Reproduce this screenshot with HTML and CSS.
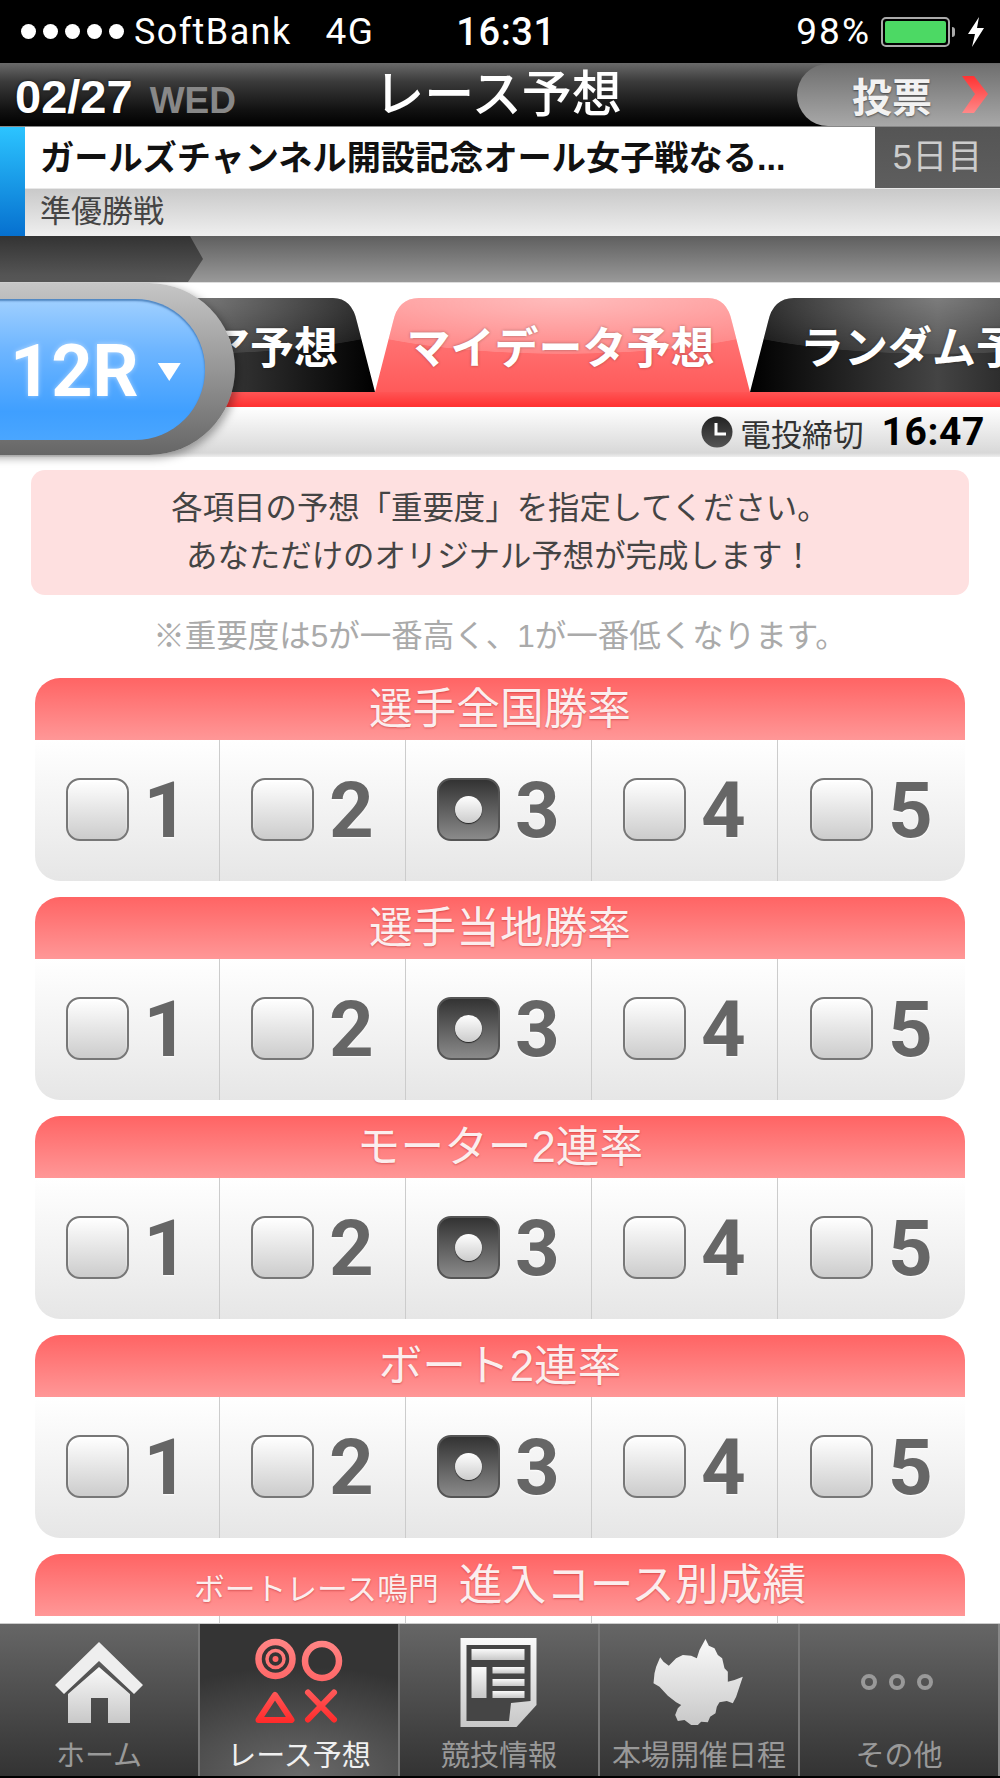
FILE: index.html
```html
<!DOCTYPE html>
<html lang="ja">
<head>
<meta charset="utf-8">
<title>レース予想</title>
<link rel="stylesheet" href="styles.css">
</head>
<body>
<div class="app">
  <div class="status">
    <div class="status-left">
      <span class="dots"><i></i><i></i><i></i><i></i><i></i></span>
      <span class="carrier">SoftBank</span>
      <span class="net">4G</span>
    </div>
    <div class="status-time">16:31</div>
    <div class="status-right">
      <span class="pct">98%</span>
      <span class="battery"><span class="battery-fill"></span></span>
      <span class="battery-nub"></span>
      <svg class="bolt" viewBox="0 0 18 30"><path d="M12 0 L1 17 L8 17 L5 30 L17 11 L10 11 Z" fill="#fff"/></svg>
    </div>
  </div>

  <header class="head">
    <div class="date"><b>02/27</b><span>WED</span></div>
    <h1 class="title">レース予想</h1>
    <div class="vote-wrap">
      <div class="vote"><span>投票</span>
        <svg class="chev" viewBox="0 0 26 37"><defs><linearGradient id="cg" x1="0" y1="0" x2="0" y2="1"><stop offset="0" stop-color="#f33"/><stop offset="1" stop-color="#f88"/></linearGradient></defs><path d="M0 0 L12 0 L26 18 L12 37 L0 37 L13 18 Z" fill="url(#cg)"/></svg>
      </div>
    </div>
  </header>

  <section class="event">
    <div class="strip"></div>
    <div class="event-body">
      <div class="event-top">
        <div class="event-title">ガールズチャンネル開設記念オール女子戦なる...</div>
        <div class="event-day">5日目</div>
      </div>
      <div class="event-sub">準優勝戦</div>
    </div>
  </section>

  <div class="progress"><div class="progress-done"></div></div>

  <section class="tabs-wrap">
    <div class="tabs">
      <div class="tab tab-dark tab-first">プレミア予想</div>
      <div class="tab tab-red">マイデータ予想</div>
      <div class="tab tab-dark tab-last">ランダム予想</div>
    </div>
    <div class="tabs-line"></div>
    <div class="deadline">
      <svg class="clock" viewBox="0 0 32 32"><defs><linearGradient id="clk" x1="0" y1="0" x2="0" y2="1"><stop offset="0" stop-color="#222"/><stop offset="1" stop-color="#555"/></linearGradient></defs><circle cx="16" cy="16" r="15.5" fill="url(#clk)"/><path d="M15 7 V18 H25" fill="none" stroke="#fff" stroke-width="3"/></svg>
      <span class="dl-label">電投締切</span>
      <b class="dl-time">16:47</b>
    </div>
    <div class="race-btn">
      <div class="race-inner"><span class="race-no">12R</span><i class="race-tri"></i></div>
    </div>
  </section>

  <main class="main">
    <div class="notice">各項目の予想「重要度」を指定してください。<br>あなただけのオリジナル予想が完成します！</div>
    <p class="note">※重要度は5が一番高く、1が一番低くなります。</p>

    <section class="card">
      <h2 class="card-head">選手全国勝率</h2>
      <div class="card-body">
        <div class="cell"><i class="box"></i><b class="num">1</b></div>
        <div class="cell"><i class="box"></i><b class="num">2</b></div>
        <div class="cell"><i class="box on"></i><b class="num">3</b></div>
        <div class="cell"><i class="box"></i><b class="num">4</b></div>
        <div class="cell"><i class="box"></i><b class="num">5</b></div>
      </div>
    </section>
    <section class="card">
      <h2 class="card-head">選手当地勝率</h2>
      <div class="card-body">
        <div class="cell"><i class="box"></i><b class="num">1</b></div>
        <div class="cell"><i class="box"></i><b class="num">2</b></div>
        <div class="cell"><i class="box on"></i><b class="num">3</b></div>
        <div class="cell"><i class="box"></i><b class="num">4</b></div>
        <div class="cell"><i class="box"></i><b class="num">5</b></div>
      </div>
    </section>
    <section class="card">
      <h2 class="card-head">モーター2連率</h2>
      <div class="card-body">
        <div class="cell"><i class="box"></i><b class="num">1</b></div>
        <div class="cell"><i class="box"></i><b class="num">2</b></div>
        <div class="cell"><i class="box on"></i><b class="num">3</b></div>
        <div class="cell"><i class="box"></i><b class="num">4</b></div>
        <div class="cell"><i class="box"></i><b class="num">5</b></div>
      </div>
    </section>
    <section class="card">
      <h2 class="card-head">ボート2連率</h2>
      <div class="card-body">
        <div class="cell"><i class="box"></i><b class="num">1</b></div>
        <div class="cell"><i class="box"></i><b class="num">2</b></div>
        <div class="cell"><i class="box on"></i><b class="num">3</b></div>
        <div class="cell"><i class="box"></i><b class="num">4</b></div>
        <div class="cell"><i class="box"></i><b class="num">5</b></div>
      </div>
    </section>
    <section class="card">
      <h2 class="card-head"><small>ボートレース鳴門</small>進入コース別成績</h2>
      <div class="card-body">
        <div class="cell"><i class="box"></i><b class="num">1</b></div>
        <div class="cell"><i class="box"></i><b class="num">2</b></div>
        <div class="cell"><i class="box on"></i><b class="num">3</b></div>
        <div class="cell"><i class="box"></i><b class="num">4</b></div>
        <div class="cell"><i class="box"></i><b class="num">5</b></div>
      </div>
    </section>
  </main>

  <nav class="tabbar">
    <svg class="defs" width="0" height="0"><defs>
      <linearGradient id="wg" x1="0" y1="0" x2="0" y2="1"><stop offset="0" stop-color="#fafafa"/><stop offset="1" stop-color="#c8c8c8"/></linearGradient>
      <linearGradient id="rg" gradientUnits="userSpaceOnUse" x1="0" y1="0" x2="0" y2="92"><stop offset="0" stop-color="#f88"/><stop offset=".5" stop-color="#f66"/><stop offset="1" stop-color="#f22"/></linearGradient>
    </defs></svg>
    <div class="nav-item">
      <svg class="nav-icon" viewBox="0 0 120 92">
        <path d="M60 6 L104 49 L95 58 L60 25 L25 58 L16 49 Z" fill="#eee"/>
        <path d="M29 58 L60 31 L91 58 V87 H69 V62 H52 V87 H29 Z" fill="url(#wg)"/>
      </svg>
      <span class="nav-label">ホーム</span>
    </div>
    <div class="nav-item active">
      <svg class="nav-icon" viewBox="0 0 120 92">
        <g fill="none" stroke="url(#rg)">
          <circle cx="36.5" cy="23" r="17" stroke-width="6.5"/>
          <circle cx="36.5" cy="23" r="8.5" stroke-width="3.5"/>
          <circle cx="83" cy="25" r="17" stroke-width="6.5"/>
          <path d="M36 59 L52.5 84 H19.5 Z" stroke-width="6" stroke-linejoin="round"/>
          <path d="M69 56.5 L95 83.5 M95 56.5 L69 83.5" stroke-width="6" stroke-linecap="round"/>
        </g>
        <circle cx="36.5" cy="23" r="3" fill="#f66"/>
      </svg>
      <span class="nav-label">レース予想</span>
    </div>
    <div class="nav-item">
      <svg class="nav-icon" viewBox="0 0 120 92">
        <path d="M21.5 2 H97.5 V69 L77.5 91 H21.5 Z" fill="url(#wg)"/>
        <path d="M27.5 9 H91.5 V65 L72 67 L70 85 H27.5 Z" fill="#454545"/>
        <g fill="url(#wg)">
          <rect x="32.5" y="13" width="53" height="11"/>
          <rect x="32.5" y="31" width="15" height="31"/>
          <rect x="53.5" y="31" width="32" height="6.5"/>
          <rect x="53.5" y="43" width="32" height="7"/>
          <rect x="53.5" y="55" width="32" height="7"/>
        </g>
      </svg>
      <span class="nav-label">競技情報</span>
    </div>
    <div class="nav-item">
      <svg class="nav-icon" viewBox="0 0 120 92">
        <path transform="translate(.5 -11) scale(.3333)" d="M198 42 L208 62 L225 70 L235 90 L248 100 L255 130 L265 140 L265 170 L285 165 L310 155 L300 185 L290 215 L280 235 L262 228 L240 232 L232 245 L228 265 L212 275 L205 292 L185 290 L175 300 L155 300 L135 285 L115 288 L107 270 L115 250 L125 240 L110 232 L85 212 L60 185 L42 175 L45 145 L50 125 L62 97 L72 110 L88 122 L110 100 L130 90 L155 92 L172 100 L180 75 Z" fill="url(#wg)"/>
      </svg>
      <span class="nav-label">本場開催日程</span>
    </div>
    <div class="nav-item">
      <svg class="nav-icon" viewBox="0 0 120 92">
        <g fill="none" stroke="#999" stroke-width="4">
          <circle cx="30" cy="46" r="6"/><circle cx="58" cy="46" r="6"/><circle cx="86" cy="46" r="6"/>
        </g>
      </svg>
      <span class="nav-label">その他</span>
    </div>
  </nav>
</div>
</body>
</html>
```
FILE: styles.css
```css
html, body { margin: 0; padding: 0; background: #fff; }
* { box-sizing: border-box; }
body { font-family: "Liberation Sans", "Noto Sans CJK JP", sans-serif; }
i { font-style: normal; display: block; }

.app { width: 1000px; height: 1778px; display: flex; flex-direction: column; overflow: hidden; }

/* status bar */
.status { flex: none; height: 63px; background: #000; color: #fff; display: flex; align-items: center; font-family: Roboto, "Liberation Sans", sans-serif; font-size: 36px; letter-spacing: 1.4px; padding: 0 15px 0 21px; }
.status-left { flex: 1; display: flex; align-items: center; }
.dots { display: flex; gap: 7px; margin-right: 10px; }
.dots i { width: 15px; height: 15px; border-radius: 50%; background: #fff; }
.net { margin-left: 34px; font-size: 37px; }
.status-time { font-weight: 500; font-size: 38px; margin-left: 6px; letter-spacing: .6px; }
.status-right { flex: 1; display: flex; align-items: center; justify-content: flex-end; }
.pct { margin-right: 10px; font-size: 37px; letter-spacing: 2px; }
.battery { width: 69px; height: 30px; border: 2px solid #aaa; border-radius: 5px; padding: 2px; display: block; }
.battery-fill { display: block; width: 100%; height: 100%; background: #4cd964; border-radius: 2px; }
.battery-nub { width: 3px; height: 10px; background: #aaa; border-radius: 0 4px 4px 0; margin: 0 12px 0 2px; }
.bolt { width: 18px; height: 30px; }

/* header */
.head { flex: none; height: 64px; display: grid; grid-template-columns: 1fr auto 1fr; align-items: center; background: linear-gradient(#6a6a6a 0, #3a3a3a 30%, #111 75%, #000 100%); color: #fff; border-bottom: 1px solid #888; }
.date { display: flex; align-items: baseline; gap: 17px; margin: 3px 0 0 15px; }
.date b { font-size: 47px; letter-spacing: 0; text-shadow: 0 0 3px rgba(0,0,0,.8); }
.date span { font-size: 37px; font-weight: 700; color: #888; }
.title { margin: 0 4px 0 0; font-size: 50px; font-weight: 500; line-height: 62px; }
.vote-wrap { display: flex; justify-content: flex-end; height: 62px; }
.vote { width: 203px; height: 62px; border-radius: 31px 0 0 31px; background: linear-gradient(#6f6f6f, #a8a8a8); display: flex; align-items: center; padding-left: 55px; font-size: 40px; font-weight: 700; color: #f2f2f2; text-shadow: 0 1px 2px rgba(0,0,0,.5); }
.chev { width: 26px; height: 37px; margin-left: 30px; flex: none; }

/* event */
.event { flex: none; height: 109px; display: flex; }
.strip { width: 25px; background: linear-gradient(#2cc4ff, #0670cf); }
.event-body { flex: 1; display: flex; flex-direction: column; }
.event-top { height: 62px; display: flex; background: #fff; border-bottom: 1px solid #e8e8e8; }
.event-title { flex: 1; padding-left: 15px; font-size: 34.2px; font-weight: 700; line-height: 62px; color: #111; white-space: nowrap; }
.event-day { width: 125px; background: linear-gradient(#555, #5e5e5e); color: #ccc; font-size: 35px; line-height: 60px; text-align: center; }
.event-sub { flex: 1; padding-left: 15px; font-size: 31px; line-height: 46px; color: #444; background: linear-gradient(#c9c9c9, #efefef); }

/* progress */
.progress { flex: none; height: 47px; background: linear-gradient(#5f5f5f, #999); border-bottom: 1px solid #ddd; }
.progress-done { width: 204px; height: 46px; background: linear-gradient(#333, #5a5a5a); clip-path: polygon(0 0, 190px 0, 203px 23px, 188px 46px, 0 46px); }

/* tabs */
.tabs-wrap { flex: none; position: relative; height: 174px; background: #fff; padding-top: 15px; }
.tabs { height: 94px; display: flex; overflow: hidden; }
.tab { flex: none; width: 375px; height: 94px; clip-path: path("M0 94 L18 24 Q23 0 44 0 L333 0 Q352 0 357 24 L375 94 Z"); color: #fff; font-size: 44px; font-weight: 700; line-height: 101px; text-align: center; white-space: nowrap; text-shadow: 0 0 3px rgba(0,0,0,.35); }
.tab-dark { background: radial-gradient(ellipse 260px 56px at 50% 0, rgba(255,255,255,.3) 0, rgba(255,255,255,.1) 99%, transparent 100%), linear-gradient(90deg, #000, #444 50%, #000); }
.tab-first { display: flex; justify-content: flex-end; padding-right: 37px; }
.tab-last { text-align: left; padding-left: 50px; }
.tab-red { background: radial-gradient(ellipse 260px 56px at 50% 0, rgba(255,255,255,.45) 0, rgba(255,255,255,.18) 99%, transparent 100%), linear-gradient(#ff8585, #ff5a5a); padding-right: 4px; }
.tabs-line { height: 15px; background: linear-gradient(#f55, #f33); border-bottom: 1px solid #f33; }
.deadline { height: 50px; background: linear-gradient(#fff, #d8d8d8 92%, #eee); display: flex; align-items: center; justify-content: flex-end; padding: 0 15px 0 0; }
.clock { width: 32px; height: 32px; margin-right: 7px; }
.dl-label { font-size: 30.8px; color: #333; }
.dl-time { font-family: Roboto, "Liberation Sans", sans-serif; font-size: 39px; color: #000; margin-left: 18px; letter-spacing: .6px; }

.race-btn { position: absolute; left: -100px; top: 0; width: 335px; height: 172px; border-radius: 86px; background: linear-gradient(#c6c6c6, #666); box-shadow: 3px 3px 8px rgba(0,0,0,.35); display: flex; align-items: center; padding-right: 30px; }
.race-inner { width: 305px; height: 141px; border-radius: 70px; background: linear-gradient(#a0d0ff, #6fb6ff 35%, #3f9fff 80%, #4aa6ff); box-shadow: inset 0 2px 2px rgba(0,60,130,.5); display: flex; align-items: center; padding-left: 110px; color: #fff; }
.race-no { font-family: Roboto, "Liberation Sans", sans-serif; font-size: 72px; font-weight: 700; text-shadow: 0 0 5px rgba(255,255,255,.5); line-height: 1; margin-top: 6px; }
.race-tri { width: 23px; height: 18px; margin: 6px 0 0 19px; background: #fff; clip-path: polygon(0 0, 100% 0, 50% 100%); }

/* main */
.main { flex: 1; min-height: 0; overflow: hidden; padding-top: 13px; }
.notice { margin: 0 31px; height: 125px; border-radius: 14px; background: #fee0e0; color: #444; font-size: 31.4px; line-height: 48px; text-align: center; padding-top: 15px; }
.note { margin: 0; height: 83px; line-height: 83px; text-align: center; font-size: 31.5px; color: #aaa; }
.card { margin: 0 35px 16px; }
.card-head { margin: 0; height: 62px; border-radius: 25px 25px 0 0; background: linear-gradient(#ff6464, #ff9797); color: #fbeeee; font-size: 43.7px; font-weight: 400; line-height: 62px; text-align: center; text-shadow: 0 1px 2px rgba(150,0,0,.35); }
.card-head small { font-size: 30.8px; margin-right: 20px; }
.card-body { height: 141px; border-radius: 0 0 25px 25px; background: linear-gradient(#fff, #e6e6e6); display: grid; grid-template-columns: 185px 186px 186px 186px 187px; }
.cell { display: flex; align-items: center; justify-content: center; gap: 15px; border-right: 1px solid #ccc; }
.cell:last-child { border-right: 0; }
.box { width: 63px; height: 63px; margin-bottom: 2px; border: 2px solid #777; border-radius: 14px; background: linear-gradient(#fff, #ccc); box-shadow: inset 0 2px 2px rgba(255,255,255,.9); }
.box.on { border-color: #555; background: linear-gradient(#333, #8a8a8a); display: flex; align-items: center; justify-content: center; box-shadow: none; }
.box.on::after { content: ""; width: 27px; height: 27px; border-radius: 50%; background: linear-gradient(#fff, #ccc); box-shadow: 0 1px 1px rgba(0,0,0,.7); }
.num { font-family: Roboto, "Liberation Sans", sans-serif; font-size: 78px; line-height: 1; color: #666; width: 45px; text-shadow: 0 1px 2px #fff; }

/* tab bar */
.tabbar { flex: none; height: 155px; display: flex; background: linear-gradient(#666, #333); border-top: 1px solid #ccc; border-bottom: 2px solid #000; }
.defs { position: absolute; }
.nav-item { width: 200px; display: flex; flex-direction: column; align-items: center; padding-top: 12px; border-right: 2px solid #777; color: #999; }
.nav-item:last-child { border-right: 2px solid #888; }
.nav-item.active { background: radial-gradient(ellipse 120% 80% at 50% 100%, #6a6a6a, #343434 90%); color: #f0f0f0; }
.nav-icon { width: 120px; height: 92px; flex: none; }
.nav-label { margin-top: 12px; font-size: 29px; line-height: 32px; white-space: nowrap; }
```
